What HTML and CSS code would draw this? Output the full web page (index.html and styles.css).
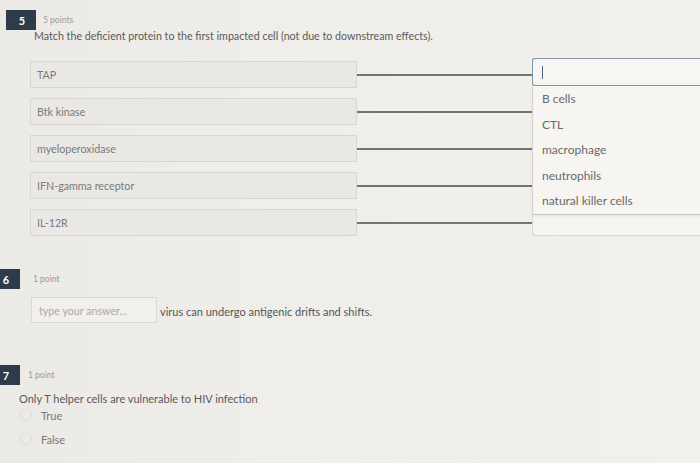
FILE: index.html
```html
<!DOCTYPE html>
<html>
<head>
<meta charset="utf-8">
<link rel="stylesheet" href="styles.css">
</head>
<body>
<div class="page">
  <section class="q q5">
    <div class="q-head"><span class="badge">5</span><span class="pts">5 points</span></div>
    <p class="q-text">Match the deficient protein to the first impacted cell (not due to downstream effects).</p>
    <div class="match">
      <div class="row">
        <div class="term">TAP</div><div class="link"></div>
        <div class="pick-wrap">
          <div class="pick focus"><span class="caret"></span></div>
          <ul class="menu">
            <li>B cells</li>
            <li>CTL</li>
            <li>macrophage</li>
            <li>neutrophils</li>
            <li>natural killer cells</li>
          </ul>
        </div>
      </div>
      <div class="row"><div class="term">Btk kinase</div><div class="link"></div><div class="pick-wrap"><div class="pick"></div></div></div>
      <div class="row"><div class="term">myeloperoxidase</div><div class="link"></div><div class="pick-wrap"><div class="pick"></div></div></div>
      <div class="row"><div class="term">IFN-gamma receptor</div><div class="link"></div><div class="pick-wrap"><div class="pick"></div></div></div>
      <div class="row"><div class="term">IL-12R</div><div class="link"></div><div class="pick-wrap"><div class="pick"></div></div></div>
    </div>
  </section>

  <section class="q q6">
    <div class="q-head"><span class="badge">6</span><span class="pts">1 point</span></div>
    <div class="fill">
      <div class="answer">type your answer...</div>
      <span class="fill-text">virus can undergo antigenic drifts and shifts.</span>
    </div>
  </section>

  <section class="q q7">
    <div class="q-head"><span class="badge">7</span><span class="pts">1 point</span></div>
    <p class="q-text">Only T helper cells are vulnerable to HIV infection</p>
    <div class="opts">
      <label class="opt"><span class="radio"></span>True</label>
      <label class="opt"><span class="radio"></span>False</label>
    </div>
  </section>
</div>
</body>
</html>
```

FILE: styles.css
```css
html, body {
  margin: 0;
  padding: 0;
}
body {
  background: linear-gradient(90deg, #ebeae7 0%, #efeeea 40%, #f2f0ea 100%);
  font-family: Lato, "Noto Sans", sans-serif;
  color: #555;
  width: 700px;
  height: 463px;
  overflow: hidden;
}
.page {
  padding-top: 10px;
}
.q-head {
  display: flex;
  align-items: center;
  gap: 7px;
  height: 20px;
}
.badge {
  width: 30px;
  height: 20px;
  background: #2e3b4a;
  color: #fff;
  font-weight: 700;
  font-size: 11px;
  display: flex;
  align-items: center;
  justify-content: center;
  box-sizing: border-box;
  padding-left: 2px;
}
.pts {
  font-size: 8.5px;
  color: #9a9a9a;
}
.q-text {
  margin: 0;
  font-size: 10.7px;
  line-height: 14px;
  color: #5a5a5a;
}

/* Q5 */
.q5 {
  padding-left: 6px;
}
.q5 .q-text {
  padding-left: 28px;
  margin-top: -1px;
}
.match {
  margin-top: 18px;
  display: flex;
  flex-direction: column;
  gap: 10px;
  padding-left: 24px;
}
.row {
  display: flex;
  align-items: center;
  height: 27px;
}
.term {
  width: 327px;
  height: 27px;
  box-sizing: border-box;
  background: #e9e8e4;
  border: 1px solid #d8d6d2;
  font-size: 10.7px;
  color: #7a7a7a;
  padding-left: 6px;
  display: flex;
  align-items: center;
}
.link {
  flex: 1;
  height: 2px;
  background: #737371;
}
.pick-wrap {
  position: relative;
  width: 170px;
  height: 27px;
  margin-right: -2px;
}
.pick {
  height: 27px;
  box-sizing: border-box;
  border: 1px solid #d9d7d2;
  border-right: none;
  border-radius: 3px 0 0 3px;
  background: #f5f4f0;
}
.pick.focus {
  height: 28px;
  margin-top: -3px;
  border: 1px solid #8193a8;
  border-right: none;
  background: #f7f6f2;
  display: flex;
  align-items: center;
  padding-left: 9px;
}
.caret {
  width: 1px;
  height: 13px;
  background: #55667e;
}
.menu {
  position: absolute;
  top: 25px;
  left: 0;
  right: 0;
  margin: 0;
  padding: 0;
  list-style: none;
  background: #f6f5f1;
  border-left: 1px solid #d6d4cf;
  border-bottom: 1px solid #c9c7c2;
  box-shadow: 0 1px 2px rgba(0,0,0,0.08);
  z-index: 2;
}
.menu li {
  height: 25.5px;
  line-height: 25.5px;
  padding-left: 9px;
  font-size: 12px;
  color: #6a6a6a;
}

/* Q6 */
.q6 {
  margin-top: 33px;
  margin-left: -10px;
}
.q6 .q-head {
  gap: 13px;
}
.fill {
  display: flex;
  align-items: center;
  gap: 3px;
  margin-top: 8px;
  padding-left: 41px;
}
.answer {
  width: 126px;
  height: 26px;
  box-sizing: border-box;
  border: 1px solid #dad8d3;
  border-radius: 2px;
  background: #f1f0ec;
  font-size: 10.7px;
  color: #a9a9a9;
  padding-left: 7px;
  display: flex;
  align-items: center;
}
.fill-text {
  font-size: 11px;
  color: #555;
  padding-top: 3px;
}

/* Q7 */
.q7 {
  margin-top: 42px;
  margin-left: -10px;
}
.q7 .q-head {
  gap: 8px;
}
.q7 .q-text {
  padding-left: 29px;
  margin-top: 7px;
  font-size: 11px;
}
.opts {
  display: flex;
  flex-direction: column;
  padding-left: 30px;
  margin-top: -3px;
}
.opt {
  display: flex;
  align-items: center;
  gap: 9px;
  height: 24px;
  font-size: 11px;
  color: #777;
}
.radio {
  width: 12px;
  height: 12px;
  box-sizing: border-box;
  border: 1px solid #dddbd6;
  border-radius: 50%;
  background: #ecebe7;
}
```
